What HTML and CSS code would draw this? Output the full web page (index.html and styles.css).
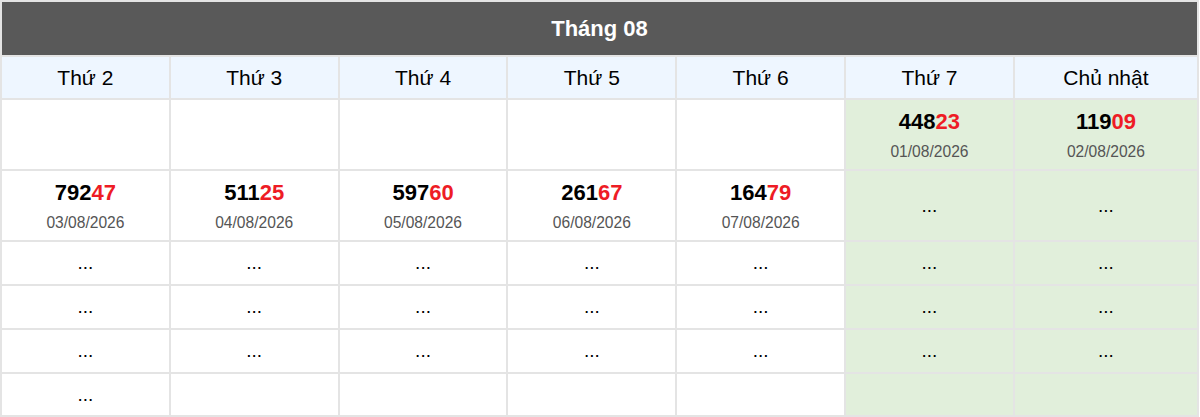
FILE: index.html
```html
<!DOCTYPE html>
<html lang="vi">
<head>
<meta charset="utf-8">
<title>Tháng 08</title>
<link rel="stylesheet" href="styles.css">
</head>
<body>
<table class="cal">
  <colgroup>
    <col class="c"><col class="c"><col class="c"><col class="c"><col class="c"><col class="c"><col class="c-last">
  </colgroup>
  <thead>
    <tr><th class="title" colspan="7">Tháng 08</th></tr>
    <tr class="days">
      <th>Thứ 2</th><th>Thứ 3</th><th>Thứ 4</th><th>Thứ 5</th><th>Thứ 6</th><th>Thứ 7</th><th>Chủ nhật</th>
    </tr>
  </thead>
  <tbody>
    <tr class="big">
      <td></td><td></td><td></td><td></td><td></td>
      <td class="we"><div class="num">448<span class="red">23</span></div><div class="date">01/08/2026</div></td>
      <td class="we"><div class="num">119<span class="red">09</span></div><div class="date">02/08/2026</div></td>
    </tr>
    <tr class="big">
      <td><div class="num">792<span class="red">47</span></div><div class="date">03/08/2026</div></td>
      <td><div class="num">511<span class="red">25</span></div><div class="date">04/08/2026</div></td>
      <td><div class="num">597<span class="red">60</span></div><div class="date">05/08/2026</div></td>
      <td><div class="num">261<span class="red">67</span></div><div class="date">06/08/2026</div></td>
      <td><div class="num">164<span class="red">79</span></div><div class="date">07/08/2026</div></td>
      <td class="we dots">...</td>
      <td class="we dots">...</td>
    </tr>
    <tr class="small">
      <td class="dots">...</td><td class="dots">...</td><td class="dots">...</td><td class="dots">...</td><td class="dots">...</td>
      <td class="we dots">...</td><td class="we dots">...</td>
    </tr>
    <tr class="small">
      <td class="dots">...</td><td class="dots">...</td><td class="dots">...</td><td class="dots">...</td><td class="dots">...</td>
      <td class="we dots">...</td><td class="we dots">...</td>
    </tr>
    <tr class="small">
      <td class="dots">...</td><td class="dots">...</td><td class="dots">...</td><td class="dots">...</td><td class="dots">...</td>
      <td class="we dots">...</td><td class="we dots">...</td>
    </tr>
    <tr class="small last">
      <td class="dots">...</td><td></td><td></td><td></td><td></td>
      <td class="we"></td><td class="we"></td>
    </tr>
  </tbody>
</table>
</body>
</html>
```

FILE: styles.css
```css
html, body {
  margin: 0;
  padding: 0;
  background: #ffffff;
}

body {
  font-family: "Liberation Sans", Arial, sans-serif;
  color: #000;
}

.cal {
  border-collapse: separate;
  border-spacing: 0;
  table-layout: fixed;
  width: 1199px;
  border: 1px solid #e4e4e4;
}

.c { width: 168.8px; }
.c-last { width: 184px; }

.cal th, .cal td {
  border: 1px solid #e4e4e4;
  padding: 0;
  text-align: center;
  vertical-align: middle;
}

.title {
  background: #595959;
  color: #ffffff;
  font-size: 22px;
  font-weight: bold;
  height: 53px;
}

.days th {
  background: #eef6ff;
  font-size: 21px;
  font-weight: normal;
  height: 41px;
}

.big td { height: 69px; }
.small td { height: 42px; }
.small.last td { height: 41px; }

.we { background: #e1efdb; }

.num {
  font-size: 22px;
  font-weight: bold;
  line-height: 26px;
}

.red { color: #ee1c25; }

.date {
  font-size: 15.6px;
  color: #555555;
  line-height: 18px;
  margin-top: 8px;
}

.dots {
  font-size: 19px;
}
```
